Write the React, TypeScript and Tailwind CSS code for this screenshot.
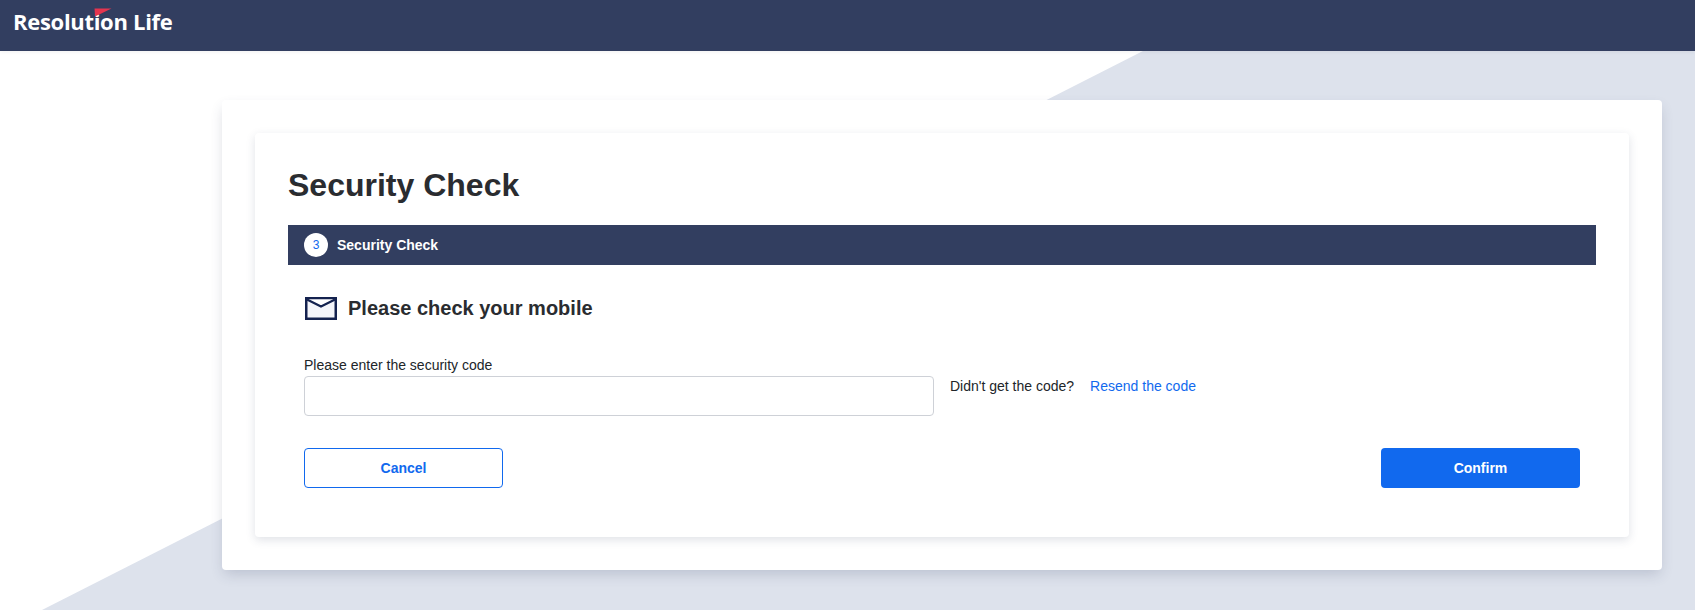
export default function App() {
  return (
    <div className="relative h-[610px] w-full overflow-hidden bg-white font-['Liberation_Sans',Arial,sans-serif] text-[#212529]">
      <div className="absolute inset-0 bg-[#dde2ec] [clip-path:polygon(1143px_51px,100%_51px,100%_100%,42px_100%)]" />
      <header className="relative z-10 flex h-[51px] items-start bg-[#323e60] pl-[13px] shadow-[0_1px_4px_rgba(0,0,0,0.06)]">
        <div className="relative mt-[6px] font-['Open_Sans',sans-serif] text-[22px] font-bold leading-[30px] tracking-[-0.3px] text-white">
          Resolution Life
          <svg className="absolute left-[81px] top-[2px]" width="18" height="9" viewBox="0 0 18 9" aria-hidden="true">
            <path d="M0.5 0.5H17.5L1 8.5Z" fill="#e5344f" />
          </svg>
        </div>
      </header>
      <main className="relative ml-[222px] mt-[49px] h-[470px] w-[1440px] rounded-[4px] bg-white p-[33px] shadow-[0_6px_14px_-2px_rgba(50,62,96,0.2)]">
        <section className="flex h-[404px] flex-col rounded-[4px] bg-white px-[33px] pt-[33px] shadow-[0_3px_10px_rgba(50,62,96,0.15)]">
          <h1 className="text-[32px] font-bold leading-[38px] text-[#2a2c30]">Security Check</h1>
          <div className="mt-[21px] flex h-[40px] items-center gap-[9px] bg-[#323e60] pl-[16px]">
            <span className="flex h-[24px] w-[24px] items-center justify-center rounded-full bg-white text-[12px] text-[#1169ee]">3</span>
            <span className="text-[14px] font-bold text-white">Security Check</span>
          </div>
          <div className="px-[16px]">
            <div className="mt-[31px] flex h-[24px] items-center gap-[11px] pl-[1px]">
              <svg width="32" height="23" viewBox="0 0 32 23" aria-hidden="true">
                <rect x="1.25" y="1.25" width="29.5" height="20.5" fill="#f4f5fa" stroke="#14224f" strokeWidth="2.5" />
                <path d="M2 2.5L16 9.5L30 2.5" fill="#ffffff" stroke="#14224f" strokeWidth="2.2" />
              </svg>
              <h2 className="text-[20px] font-bold leading-[24px] text-[#2a2c30]">Please check your mobile</h2>
            </div>
            <div className="mt-[35px] flex items-end">
              <label className="block w-[630px]">
                <span className="block pb-[1px] text-[14px] leading-[20px]">Please enter the security code</span>
                <input className="block h-[40px] w-full rounded-[4px] border border-[#ced1d7] bg-white" aria-label="Please enter the security code" />
              </label>
              <div className="flex h-[40px] items-center pb-[21px] text-[14px] leading-[16px]">
                <span className="ml-[16px]">Didn't get the code?</span>
                <a className="ml-[16px] text-[#1169ee]" href="#">Resend the code</a>
              </div>
            </div>
            <div className="mt-[32px] flex justify-between">
              <button className="h-[40px] w-[199px] rounded-[4px] border border-[#1169ee] bg-white text-[14px] font-bold text-[#1169ee]">Cancel</button>
              <button className="h-[40px] w-[199px] rounded-[4px] bg-[#1169ee] text-[14px] font-bold text-white">Confirm</button>
            </div>
          </div>
        </section>
      </main>
    </div>
  );
}
